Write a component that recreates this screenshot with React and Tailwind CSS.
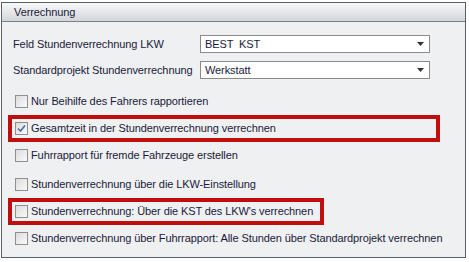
import React from "react";

function Check({ checked }) {
  return (
    <span className="relative flex h-[13px] w-[13px] shrink-0 items-center justify-center border border-[#8f8f8f] bg-gradient-to-br from-[#dcdcdc] to-[#fafafa]">
      {checked && (
        <svg width="9" height="9" viewBox="0 0 9 9" className="block">
          <path d="M1 4.5 L3.5 7 L8 1.5" fill="none" stroke="#4a6ea9" strokeWidth="1.6" />
        </svg>
      )}
    </span>
  );
}

function Row({ label, checked, red, w }) {
  return (
    <div
      className={
        "flex h-[27px] items-center gap-[3px] border-[4px] pl-[3px] " +
        (red ? "border-[#c00d0d]" : "border-transparent")
      }
      style={w ? { width: w } : undefined}
    >
      <Check checked={checked} />
      <span className="whitespace-pre">{label}</span>
    </div>
  );
}

function Select({ value }) {
  return (
    <div className="flex h-[18px] w-[230px] shrink-0 items-center justify-between border border-[#8a8a8a] bg-white pl-[4px] pr-[5px]">
      <span className="whitespace-pre">{value}</span>
      <svg width="7" height="4" viewBox="0 0 7 4">
        <path d="M0 0 H7 L3.5 4 Z" fill="#333" />
      </svg>
    </div>
  );
}

export default function App() {
  return (
    <div
      className="h-[262px] w-[469px] bg-white pl-[1px] pt-[2px] text-[11px] leading-none tracking-[-0.1px] text-[#1a1a3a]"
      style={{ fontFamily: '"Liberation Sans", Arial, sans-serif' }}
    >
      <div className="flex h-[256px] w-[465px] flex-col border border-[#5a5f66] bg-[#eff0f2]">
        <div className="flex h-[19px] items-center border-b border-[#7a7f86] bg-gradient-to-b from-[#f8f8f8] to-[#d3d6da] pl-[12px]">
          Verrechnung
        </div>
        <div className="flex flex-col pl-[11px] pt-[13px]">
          <div className="flex items-center">
            <span className="w-[187px] shrink-0 whitespace-nowrap">Feld Stundenverrechnung LKW</span>
            <Select value="BEST  KST" />
          </div>
          <div className="mt-[8px] flex items-center">
            <span className="w-[187px] shrink-0 whitespace-nowrap">Standardprojekt Stundenverrechnung</span>
            <Select value="Werkstatt" />
          </div>
        </div>
        <div className="flex flex-col pl-[6px] pt-[9px]">
          <Row label="Nur Beihilfe des Fahrers rapportieren" w={432} />
          <Row label="Gesamtzeit in der Stundenverrechnung verrechnen" checked red w={432} />
          <Row label="Fuhrrapport für fremde Fahrzeuge erstellen" w={432} />
          <div className="h-[2px]" />
          <Row label="Stundenverrechnung über die LKW-Einstellung" w={432} />
          <Row label="Stundenverrechnung: Über die KST des LKW's verrechnen" red w={316} />
          <Row label="Stundenverrechnung über Fuhrrapport: Alle Stunden über Standardprojekt verrechnen" w={455} />
        </div>
      </div>
    </div>
  );
}
